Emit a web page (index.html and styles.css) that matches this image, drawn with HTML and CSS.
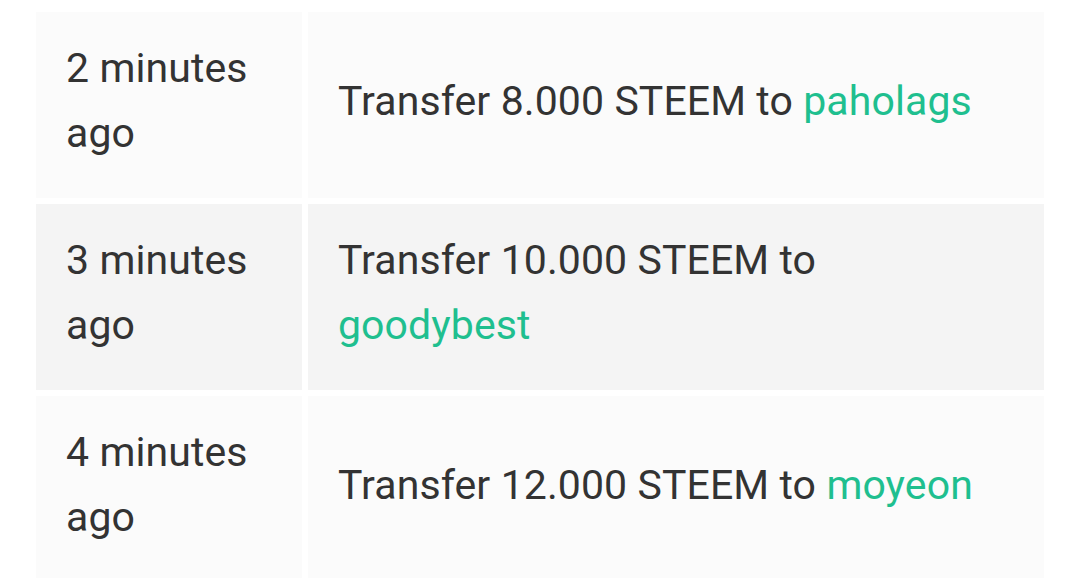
FILE: index.html
```html
<!DOCTYPE html>
<html lang="en">
<head>
<meta charset="utf-8">
<title>Transfers</title>
<link rel="stylesheet" href="styles.css">
</head>
<body>
<div class="table">
  <div class="cell time odd">2 minutes ago</div>
  <div class="cell desc odd"><span>Transfer 8.000 STEEM to <a class="user" href="#">paholags</a></span></div>
  <div class="cell time even">3 minutes ago</div>
  <div class="cell desc even"><span>Transfer 10.000 STEEM to <a class="user" href="#">goodybest</a></span></div>
  <div class="cell time odd">4 minutes ago</div>
  <div class="cell desc odd"><span>Transfer 12.000 STEEM to <a class="user" href="#">moyeon</a></span></div>
</div>
</body>
</html>
```

FILE: styles.css
```css
html, body {
  margin: 0;
  padding: 0;
  background: #ffffff;
}
body {
  font-family: Roboto, "Noto Sans", sans-serif;
  font-size: 41px;
  line-height: 65px;
  letter-spacing: 0.1px;
  color: #333333;
  overflow: hidden;
}
.table {
  display: grid;
  grid-template-columns: 266px 736px;
  grid-auto-rows: 186px;
  gap: 6px;
  padding: 12px 0 0 36px;
}
.cell {
  box-sizing: border-box;
  padding: 24px 30px 32px 30px;
}
.desc {
  display: flex;
  align-items: center;
}
.odd {
  background: #fbfbfb;
}
.even {
  background: #f4f4f4;
}
.user {
  color: #1fbf8f;
  text-decoration: none;
}
```
